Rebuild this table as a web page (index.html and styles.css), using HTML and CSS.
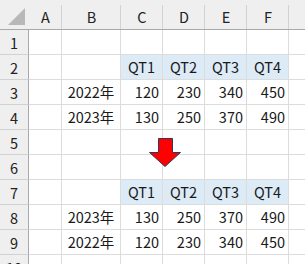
FILE: index.html
```html
<!DOCTYPE html>
<html lang="ja">
<head>
<meta charset="utf-8">
<link rel="stylesheet" href="styles.css">
</head>
<body>
<div class="wrap">
  <div class="sheet">
    <div class="ch corner"><svg class="tri" width="18" height="18" viewBox="0 0 18 18"><polygon points="17,0 17,17 0,17" fill="#b8b8b8"/></svg></div>
    <div class="ch">A</div><div class="ch">B</div><div class="ch">C</div><div class="ch">D</div><div class="ch">E</div><div class="ch">F</div><div class="ch last"></div>

    <div class="rh">1</div><div class="c"></div><div class="c"></div><div class="c"></div><div class="c"></div><div class="c"></div><div class="c"></div><div class="c"></div>

    <div class="rh">2</div><div class="c"></div><div class="c"></div><div class="c q">QT1</div><div class="c q">QT2</div><div class="c q">QT3</div><div class="c q">QT4</div><div class="c"></div>

    <div class="rh">3</div><div class="c"></div><div class="c t">2022年</div><div class="c n">120</div><div class="c n">230</div><div class="c n">340</div><div class="c n">450</div><div class="c"></div>

    <div class="rh">4</div><div class="c"></div><div class="c t">2023年</div><div class="c n">130</div><div class="c n">250</div><div class="c n">370</div><div class="c n">490</div><div class="c"></div>

    <div class="rh">5</div><div class="c"></div><div class="c"></div><div class="c"></div><div class="c"></div><div class="c"></div><div class="c"></div><div class="c"></div>

    <div class="rh">6</div><div class="c"></div><div class="c"></div><div class="c"></div><div class="c"></div><div class="c"></div><div class="c"></div><div class="c"></div>

    <div class="rh">7</div><div class="c"></div><div class="c"></div><div class="c q">QT1</div><div class="c q">QT2</div><div class="c q">QT3</div><div class="c q">QT4</div><div class="c"></div>

    <div class="rh">8</div><div class="c"></div><div class="c t">2023年</div><div class="c n">130</div><div class="c n">250</div><div class="c n">370</div><div class="c n">490</div><div class="c"></div>

    <div class="rh">9</div><div class="c"></div><div class="c t">2022年</div><div class="c n">120</div><div class="c n">230</div><div class="c n">340</div><div class="c n">450</div><div class="c"></div>

    <div class="rh">10</div><div class="c"></div><div class="c"></div><div class="c"></div><div class="c"></div><div class="c"></div><div class="c"></div><div class="c"></div>
  </div>
  <svg class="arrow" width="34" height="31" viewBox="0 0 34 31"><polygon points="10.5,1.5 24.5,1.5 24.5,15.5 32.5,15.5 17,29.5 1.5,15.5 10.5,15.5" fill="#ff0000" stroke="#2e3a5a" stroke-width="1" stroke-linejoin="miter"/></svg>
</div>
</body>
</html>
```
FILE: styles.css
```css
html, body {
  margin: 0;
  padding: 0;
  background: #ffffff;
  overflow: hidden;
}
.wrap {
  position: relative;
  width: 305px;
  height: 264px;
  overflow: hidden;
}
.sheet {
  display: grid;
  grid-template-columns: 29px 33px 59px 42px 42px 42px 42px 40px;
  grid-template-rows: 30px repeat(10, 25px);
  font-family: "Noto Sans CJK JP", "Noto Sans", sans-serif;
  font-size: 14.5px;
  color: #1a1a1a;
}
.ch {
  background-color: #efefef;
  background-image: linear-gradient(#d2d2d2, #d2d2d2);
  background-repeat: no-repeat;
  background-position: right bottom;
  background-size: 1px 24px;
  border-bottom: 1px solid #a9a9a9;
  display: flex;
  align-items: center;
  justify-content: center;
  padding-top: 3px;
  box-sizing: border-box;
  color: #222;
}
.corner {
  background-image: none;
  position: relative;
}
.tri {
  position: absolute;
  left: 8px;
  top: 8px;
}
.rh {
  background: #efefef;
  border-right: 1px solid #a9a9a9;
  border-bottom: 1px solid #d2d2d2;
  display: flex;
  align-items: center;
  justify-content: center;
  color: #222;
  box-sizing: border-box;
}
.c {
  border-right: 1px solid #dcdcdc;
  border-bottom: 1px solid #dcdcdc;
  box-sizing: border-box;
  display: flex;
  align-items: center;
  padding-bottom: 1px;
}
.q {
  background: #ddebf7;
  justify-content: center;
}
.t {
  justify-content: center;
}
.n {
  justify-content: flex-end;
  padding-right: 3px;
}
.arrow {
  position: absolute;
  left: 148px;
  top: 137px;
}
```
